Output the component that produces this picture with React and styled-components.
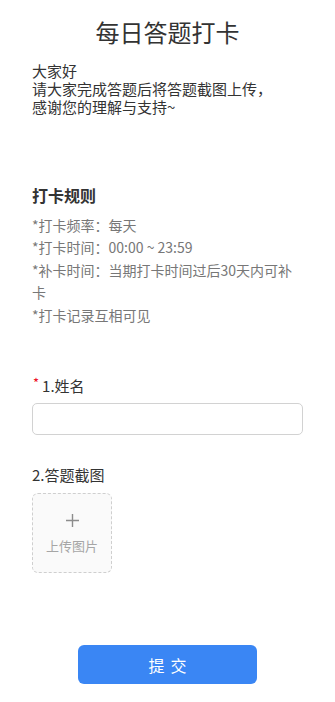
import React from 'react'
import styled, { createGlobalStyle } from 'styled-components'

const GlobalStyle = createGlobalStyle`
  body {
    margin: 0;
    background: #fff;
    font-family: "Noto Sans CJK SC", "Noto Sans", sans-serif;
    color: #333;
  }
`

const Page = styled.div`
  padding: 16px 32px 18px;
  display: flex;
  flex-direction: column;
`

const Title = styled.h1`
  margin: 0;
  font-size: 24px;
  line-height: 32px;
  font-weight: 400;
  text-align: center;
  color: #333;
`

const Intro = styled.p`
  margin: 14px 0 0;
  font-size: 15px;
  line-height: 18px;
  color: #333;
`

const RulesTitle = styled.h2`
  margin: 67px 0 0;
  font-size: 16px;
  line-height: 24px;
  font-weight: 700;
  color: #333;
`

const RuleList = styled.div`
  margin-top: 7px;
  font-size: 14px;
  line-height: 22.4px;
  color: #777;
`

const Field = styled.div`
  margin-top: ${(p) => p.$gap}px;
  display: flex;
  flex-direction: column;
`

const Label = styled.label`
  display: flex;
  align-items: flex-start;
  font-size: 15px;
  line-height: 22px;
  color: #333;
`

const Required = styled.span`
  color: #ee0a24;
  font-size: 13px;
  line-height: 16px;
  margin-right: 3px;
  margin-left: 1px;
`

const Input = styled.input`
  box-sizing: border-box;
  margin-top: 6px;
  width: 100%;
  height: 32px;
  border: 1px solid #d2d2d2;
  border-radius: 5px;
  outline: none;
  padding: 0 10px;
  font: inherit;
  font-size: 14px;
`

const Upload = styled.div`
  box-sizing: border-box;
  margin-top: 7px;
  width: 80px;
  height: 80px;
  border: 1px dashed #cfcfcf;
  border-radius: 6px;
  background: #fafafa;
  display: flex;
  flex-direction: column;
  align-items: center;
  justify-content: center;
  gap: 10px;
  color: #999;
`

const UploadText = styled.span`
  font-size: 13px;
  line-height: 16px;
  color: #a6a6a6;
`

const Submit = styled.button`
  align-self: center;
  margin-top: 72px;
  width: 179px;
  height: 39px;
  border: none;
  border-radius: 6px;
  background: #3a86f4;
  color: #fff;
  font-family: inherit;
  font-size: 16px;
  letter-spacing: 6px;
  text-indent: 6px;
`

const rules = [
  '*打卡频率：每天',
  '*打卡时间：00:00 ~ 23:59',
  '*补卡时间：当期打卡时间过后30天内可补卡',
  '*打卡记录互相可见',
]

function App() {
  return (
    <>
      <GlobalStyle />
      <Page>
        <Title>每日答题打卡</Title>
        <Intro>
          大家好
          <br />
          请大家完成答题后将答题截图上传，
          <br />
          感谢您的理解与支持~
        </Intro>

        <RulesTitle>打卡规则</RulesTitle>
        <RuleList>
          {rules.map((r) => (
            <div key={r}>{r}</div>
          ))}
        </RuleList>

        <Field $gap={49}>
          <Label>
            <Required>*</Required>1.姓名
          </Label>
          <Input type="text" />
        </Field>

        <Field $gap={29}>
          <Label>2.答题截图</Label>
          <Upload>
            <svg width="15" height="15" viewBox="0 0 15 15">
              <path d="M7.5 1v13M1 7.5h13" stroke="#8c8c8c" strokeWidth="1.4" />
            </svg>
            <UploadText>上传图片</UploadText>
          </Upload>
        </Field>

        <Submit>提交</Submit>
      </Page>
    </>
  )
}

export default App
